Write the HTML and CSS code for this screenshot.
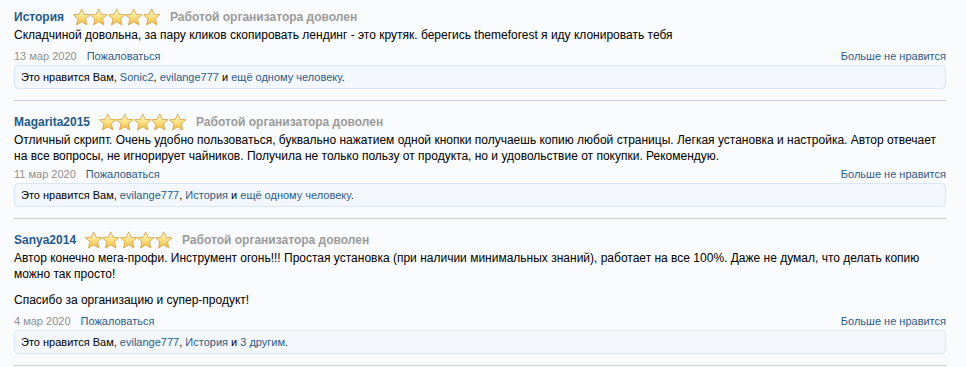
FILE: index.html
```html
<!DOCTYPE html>
<html lang="ru">
<head>
    <meta charset="UTF-8">
    <meta name="viewport" content="width=device-width, initial-scale=1.0">
    <title>Отзывы</title>
    <link rel="stylesheet" href="styles.css">
</head>
<body>
    <svg width="0" height="0" class="defs">
        <defs>
            <linearGradient id="starFill" x1="0" y1="0" x2="0" y2="1">
                <stop offset="0" stop-color="#fffce6"/>
                <stop offset="0.45" stop-color="#fde48a"/>
                <stop offset="1" stop-color="#f0bd45"/>
            </linearGradient>
            <symbol id="star" viewBox="0 0 18 18">
                <path d="M9 0.6 L11.5 6.2 L17.5 6.7 L12.9 10.7 L14.3 17.2 L9 13.9 L3.7 17.2 L5.1 10.7 L0.5 6.7 L6.5 6.2 Z" fill="url(#starFill)" stroke="#d29b35" stroke-width="0.8" stroke-linejoin="round"/>
            </symbol>
        </defs>
    </svg>

    <div class="reviews">
        <div class="review">
            <div class="review-head">
                <a class="author" href="#">История</a>
                <span class="stars">
                    <svg><use href="#star"/></svg><svg><use href="#star"/></svg><svg><use href="#star"/></svg><svg><use href="#star"/></svg><svg><use href="#star"/></svg>
                </span>
                <span class="status">Работой организатора доволен</span>
            </div>
            <div class="review-text">
                <p>Складчиной довольна, за пару кликов скопировать лендинг - это крутяк. берегись themeforest я иду клонировать тебя</p>
            </div>
            <div class="review-meta">
                <span class="date">13 мар 2020</span>
                <a href="#">Пожаловаться</a>
                <a class="unlike" href="#">Больше не нравится</a>
            </div>
            <div class="likes">Это нравится Вам, <a href="#">Sonic2</a>, <a href="#">evilange777</a> и <a href="#">ещё одному человеку</a>.</div>
        </div>

        <div class="review">
            <div class="review-head">
                <a class="author" href="#">Magarita2015</a>
                <span class="stars">
                    <svg><use href="#star"/></svg><svg><use href="#star"/></svg><svg><use href="#star"/></svg><svg><use href="#star"/></svg><svg><use href="#star"/></svg>
                </span>
                <span class="status">Работой организатора доволен</span>
            </div>
            <div class="review-text">
                <p>Отличный скрипт. Очень удобно пользоваться, буквально нажатием одной кнопки получаешь копию любой страницы. Легкая установка и настройка. Автор отвечает на все вопросы, не игнорирует чайников. Получила не только пользу от продукта, но и удовольствие от покупки. Рекомендую.</p>
            </div>
            <div class="review-meta tight">
                <span class="date">11 мар 2020</span>
                <a href="#">Пожаловаться</a>
                <a class="unlike" href="#">Больше не нравится</a>
            </div>
            <div class="likes">Это нравится Вам, <a href="#">evilange777</a>, <a href="#">История</a> и <a href="#">ещё одному человеку</a>.</div>
        </div>

        <div class="review">
            <div class="review-head">
                <a class="author" href="#">Sanya2014</a>
                <span class="stars">
                    <svg><use href="#star"/></svg><svg><use href="#star"/></svg><svg><use href="#star"/></svg><svg><use href="#star"/></svg><svg><use href="#star"/></svg>
                </span>
                <span class="status">Работой организатора доволен</span>
            </div>
            <div class="review-text">
                <p>Автор конечно мега-профи. Инструмент огонь!!! Простая установка (при наличии минимальных знаний), работает на все 100%. Даже не думал, что делать копию можно так просто!</p>
                <p>Спасибо за организацию и супер-продукт!</p>
            </div>
            <div class="review-meta">
                <span class="date">4 мар 2020</span>
                <a href="#">Пожаловаться</a>
                <a class="unlike" href="#">Больше не нравится</a>
            </div>
            <div class="likes">Это нравится Вам, <a href="#">evilange777</a>, <a href="#">История</a> и <a href="#">3 другим</a>.</div>
        </div>
    </div>
</body>
</html>
```

FILE: styles.css
```css
body {
    font-family: "Liberation Sans", Arial, sans-serif;
    font-size: 12px;
    color: #000;
    margin: 0;
    padding: 0 20px 0 14px;
    background-color: #fafbfd;
}

a {
    color: #2b5c88;
    text-decoration: none;
}

.defs {
    position: absolute;
}

.reviews {
    margin-top: -4px;
}

.review {
    padding: 11px 0 11px;
    border-bottom: 1px solid #c9d0d8;
}

.review-head {
    display: flex;
    align-items: center;
    height: 20px;
}

.author {
    font-weight: bold;
    font-size: 12px;
    color: #1f5a88;
}

.stars {
    display: flex;
    margin: 0 10px 0 9px;
}

.stars svg {
    width: 17.4px;
    height: 18px;
}

.status {
    font-weight: bold;
    color: #9a9a9a;
}

.review-text p {
    margin: 0;
    line-height: 16px;
}

.review-text p + p {
    margin-top: 10px;
}

.review-meta {
    display: flex;
    align-items: center;
    height: 18px;
    margin-top: 4px;
    font-size: 11px;
}

.review-meta.tight {
    margin-top: 1px;
}

.date {
    color: #8f8f8f;
    margin-right: 10px;
}

.unlike {
    margin-left: auto;
}

.likes {
    padding: 5px 6px;
    line-height: 12px;
    font-size: 11px;
    background-color: #f4f8fc;
    border: 1px solid #d8e7f3;
    border-radius: 4px;
}
```
